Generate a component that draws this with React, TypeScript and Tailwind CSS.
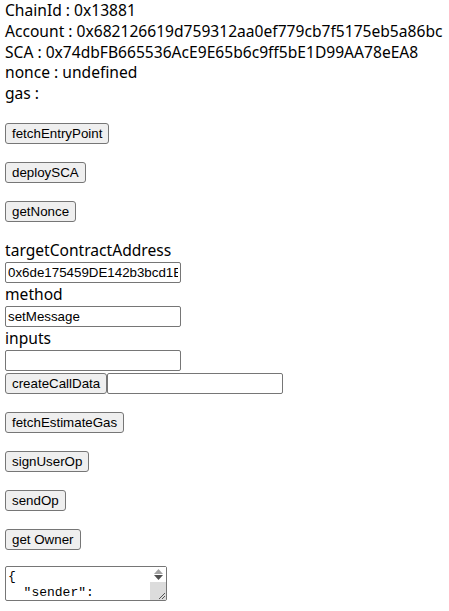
import React, { useState } from 'react';

const btn =
  "h-[21px] px-[6px] bg-[#efefef] border border-[#767676] rounded-[3px] text-[13.33px] leading-none text-black font-['Liberation_Sans',Arial,sans-serif]";
const field =
  "block h-[21px] w-[176px] px-[2px] border border-[#767676] rounded-[2px] bg-white text-[13.33px] text-black outline-none font-['Liberation_Sans',Arial,sans-serif]";

const userOpJson = `{
  "sender": "0x74dbFB665536AcE9E65b6c9ff5bE1D99AA78eEA8",
  "nonce": "0x0",
  "initCode": "0x",
  "callData": "0x",
  "signature": "0x"
}`;

export default function App() {
  const [target, setTarget] = useState('0x6de175459DE142b3bcd1E3bBb3E1e8aa5A8cC8c6');
  const [method, setMethod] = useState('setMessage');
  const [inputs, setInputs] = useState('');
  const [callData, setCallData] = useState('');

  return (
    <div className="px-[5px] pb-4 text-black font-['Noto_Sans',sans-serif] text-[15.6px]">
      <div className="leading-[20.75px] whitespace-nowrap">
        <div>ChainId : 0x13881</div>
        <div>Account : 0x682126619d759312aa0ef779cb7f5175eb5a86bc</div>
        <div>SCA : 0x74dbFB665536AcE9E65b6c9ff5bE1D99AA78eEA8</div>
        <div>nonce : undefined</div>
        <div>gas : </div>
      </div>

      <div className="mt-[19.5px] flex flex-col items-start gap-[18px]">
        <button className={btn}>fetchEntryPoint</button>
        <button className={btn}>deploySCA</button>
        <button className={btn}>getNonce</button>
      </div>

      <div className="mt-[16.5px]">
        <div className="leading-[23px]">targetContractAddress</div>
        <input className={field} value={target} onChange={(e) => setTarget(e.target.value)} />
        <div className="leading-[23px]">method</div>
        <input className={field} value={method} onChange={(e) => setMethod(e.target.value)} />
        <div className="leading-[23px]">inputs</div>
        <input className={field} value={inputs} onChange={(e) => setInputs(e.target.value)} />
        <div className="mt-[2px] flex items-start">
          <button className={btn}>createCallData</button>
          <input className={field} value={callData} onChange={(e) => setCallData(e.target.value)} />
        </div>
      </div>

      <div className="mt-[18px] flex flex-col items-start gap-[18px]">
        <button className={btn}>fetchEstimateGas</button>
        <button className={btn}>signUserOp</button>
        <button className={btn}>sendOp</button>
        <button className={btn}>get Owner</button>
      </div>

      <div className="relative mt-[16px] w-[162px] h-[35px]">
        <textarea
          className="block w-full h-full pl-[2px] pr-[18px] py-[2px] border border-[#767676] rounded-[2px] overflow-hidden resize-none text-[13px] leading-[16px] text-black font-['Liberation_Mono',monospace]"
          value={userOpJson}
          readOnly
        />
        {/* scrollbar */}
        <div className="absolute right-[1px] top-[1px] bottom-[1px] w-[16px] flex flex-col bg-white">
          <div className="h-[15px] flex flex-col items-center justify-center gap-[1px]">
            <svg width="9" height="5" viewBox="0 0 9 5"><path d="M4.5 0L9 5H0z" fill="#a3a3a3" /></svg>
            <svg width="9" height="5" viewBox="0 0 9 5"><path d="M0 0H9L4.5 5z" fill="#505050" /></svg>
          </div>
          <div className="flex-1 bg-[#dcdcdc] relative">
            <svg className="absolute right-0 bottom-0" width="10" height="10" viewBox="0 0 10 10">
              <path d="M9 3L3 9M9 6L6 9" stroke="#555" strokeWidth="1" />
            </svg>
          </div>
        </div>
      </div>
    </div>
  );
}
